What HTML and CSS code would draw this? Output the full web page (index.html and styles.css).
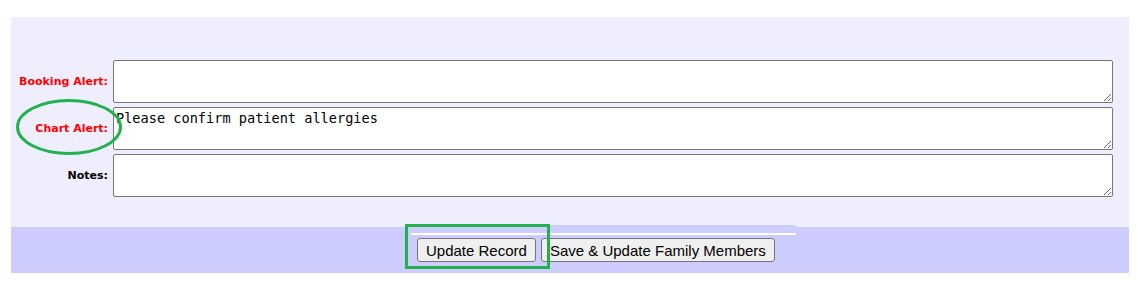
FILE: index.html
```html
<!DOCTYPE html>
<html>
<head>
<meta charset="utf-8">
<link rel="stylesheet" href="styles.css">
</head>
<body>
<div class="page">
  <div class="panel">
    <div class="fields">
      <label class="lbl alert" for="ba">Booking Alert:</label>
      <textarea id="ba" class="box"></textarea>
      <label class="lbl alert" for="ca">Chart Alert:</label>
      <textarea id="ca" class="box">Please confirm patient allergies</textarea>
      <label class="lbl" for="nt">Notes:</label>
      <textarea id="nt" class="box"></textarea>
    </div>
  </div>
  <div class="actions">
    <div class="divider"></div>
    <div class="buttons">
      <button class="btn" type="button">Update Record</button>
      <button class="btn" type="button">Save &amp; Update Family Members</button>
    </div>
  </div>
  <svg class="mark mark-ellipse" width="112" height="60" viewBox="0 0 112 60"><ellipse cx="56" cy="30" rx="51.5" ry="26.5" fill="none" stroke="#22b14c" stroke-width="3"/></svg>
  <svg class="mark mark-rect" width="146" height="46" viewBox="0 0 146 46"><rect x="1.5" y="1.5" width="142" height="42" fill="none" stroke="#22b14c" stroke-width="3"/></svg>
</div>
</body>
</html>
```
FILE: styles.css
```css
html, body {
  margin: 0;
  padding: 0;
  background: #ffffff;
}
.page {
  position: relative;
  padding: 17px 12px 0 11px;
  font-family: "DejaVu Sans", Verdana, sans-serif;
}
.panel {
  background: #eeeeff;
  padding: 43px 0 30px 0;
}
.fields {
  display: grid;
  grid-template-columns: 97px 1000px;
  column-gap: 5px;
  row-gap: 4px;
  align-items: center;
}
.lbl {
  font-weight: bold;
  font-size: 11px;
  text-align: right;
  color: #000000;
}
.lbl.alert {
  color: #ff0000;
}
.box {
  box-sizing: border-box;
  width: 1000px;
  height: 43px;
  margin: 0;
  border: 1px solid #767676;
  border-radius: 2px;
  padding: 2px;
  background: #ffffff;
  font-family: "DejaVu Sans Mono", "Liberation Mono", monospace;
  font-size: 13.6px;
  line-height: 16px;
  color: #000000;
  display: block;
}
.actions {
  background: #ccccff;
  height: 46px;
  display: flex;
  flex-direction: column;
}
.divider {
  margin: -2px 0 0 400px;
  width: 385px;
  height: 8px;
  background: #ccccff;
  border-bottom: 2px solid #ffffff;
}
.buttons {
  display: flex;
  gap: 5px;
  margin: 3px 0 0 406px;
}
.btn {
  box-sizing: border-box;
  height: 24px;
  margin: 0;
  padding: 0 8px;
  border: 1px solid #767676;
  border-radius: 3px;
  background: #efefef;
  font-family: "Liberation Sans", Arial, sans-serif;
  font-size: 15px;
  color: #000000;
}
.mark {
  position: absolute;
  display: block;
}
.mark-ellipse {
  left: 13px;
  top: 97px;
}
.mark-rect {
  left: 405px;
  top: 224px;
}
```
